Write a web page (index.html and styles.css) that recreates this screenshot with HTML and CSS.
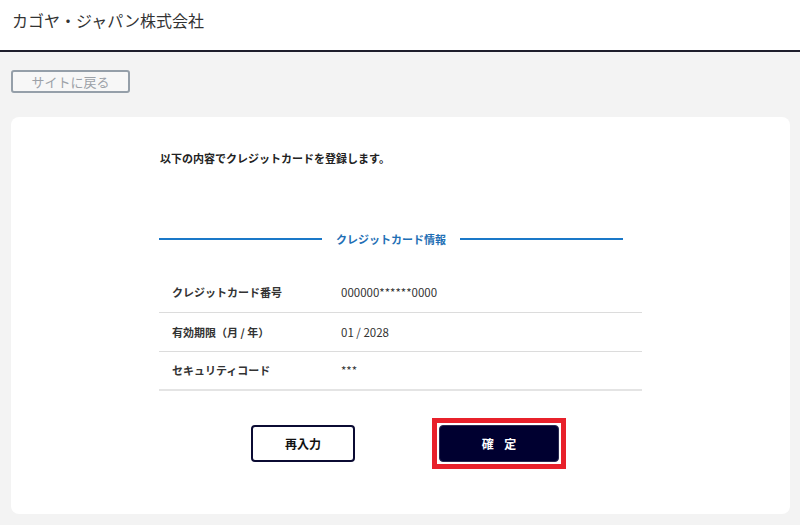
FILE: index.html
```html
<!DOCTYPE html>
<html lang="ja">
<head>
<meta charset="utf-8">
<title>カゴヤ・ジャパン株式会社</title>
<link rel="stylesheet" href="styles.css">
</head>
<body>
<header class="site-header">
  <div class="site-title">カゴヤ・ジャパン株式会社</div>
</header>
<main class="page">
  <div class="back-row"><button class="back-btn" type="button">サイトに戻る</button></div>
  <section class="card">
    <div class="content">
      <p class="intro">以下の内容でクレジットカードを登録します。</p>
      <h2 class="section-title"><span>クレジットカード情報</span></h2>
      <table class="info">
        <tr><th>クレジットカード番号</th><td>000000******0000</td></tr>
        <tr><th>有効期限（月 / 年）</th><td>01 / 2028</td></tr>
        <tr><th>セキュリティコード</th><td>***</td></tr>
      </table>
      <div class="actions">
        <button class="btn btn-outline" type="button">再入力</button>
        <button class="btn btn-primary" type="button">確 定</button>
      </div>
    </div>
  </section>
</main>
</body>
</html>
```
FILE: styles.css
```css
* { box-sizing: border-box; }
html, body { margin: 0; padding: 0; }
body {
  background: #f3f3f3;
  font-family: "Noto Sans CJK JP", "Noto Sans", sans-serif;
  color: #333;
  width: 800px;
  height: 525px;
  overflow: hidden;
}
.site-header {
  background: #fff;
  height: 52px;
  border-bottom: 2px solid #1e1e2c;
  padding: 9px 12px 0;
}
.site-title {
  font-size: 16px;
  line-height: 22px;
  color: #333;
}
.page {
  padding: 18px 10px 0 11px;
}
.back-row {
  display: flex;
  height: 23px;
}
.back-btn {
  display: block;
  width: 119px;
  height: 23px;
  background: #f7f7f7;
  border: 2px solid #959fa9;
  border-radius: 3px;
  font-family: inherit;
  font-size: 13px;
  line-height: 17px;
  color: #9ca1a7;
  padding: 0;
}
.card {
  margin-top: 24px;
  background: #fff;
  border-radius: 8px;
  height: 397px;
  padding-top: 33px;
}
.content {
  width: 483px;
  margin: 0 auto;
}
.intro {
  margin: 0;
  font-size: 11px;
  line-height: 16px;
  font-weight: 700;
  color: #222;
  padding-left: 1px;
}
.section-title {
  margin: 65px 0 0;
  width: 464px;
  display: flex;
  align-items: center;
  gap: 13px;
  font-size: 11px;
  line-height: 16px;
  font-weight: 700;
  color: #1f6fb5;
}
.section-title::before,
.section-title::after {
  content: "";
  flex: 1;
  height: 1.5px;
  background: #1a78c8;
}
.section-title span { padding: 0 1px; }
.info {
  margin-top: 26px;
  width: 100%;
  border-collapse: collapse;
  font-size: 11px;
}
.info tr { border-bottom: 1px solid #dcdcdc; }
.info tr:last-child { border-bottom: 2px solid #e4e4e4; }
.info th,
.info td {
  height: 39px;
  padding: 0;
  vertical-align: middle;
  text-align: left;
}
.info th {
  width: 182px;
  padding-left: 13px;
  font-weight: 700;
  color: #333;
}
.info td {
  font-weight: 400;
  color: #333;
  font-size: 11.5px;
}
.actions {
  margin-top: 34px;
  display: flex;
  justify-content: center;
  gap: 84px;
  padding-left: 9px;
}
.btn {
  height: 37px;
  border-radius: 4px;
  font-family: inherit;
  font-size: 12px;
  font-weight: 700;
  padding: 0;
}
.btn-outline {
  width: 104px;
  background: #fff;
  border: 2px solid #0b0b33;
  color: #111;
}
.btn-primary {
  position: relative;
  width: 120px;
  background: #000030;
  border: 1px solid #2a2a50;
  color: #fff;
  letter-spacing: 4px;
  padding-left: 4px;
}
.btn-primary::after {
  content: "";
  position: absolute;
  top: -8px;
  left: -8px;
  right: -8px;
  bottom: -8px;
  border: 5px solid #e8212b;
  pointer-events: none;
}
```
